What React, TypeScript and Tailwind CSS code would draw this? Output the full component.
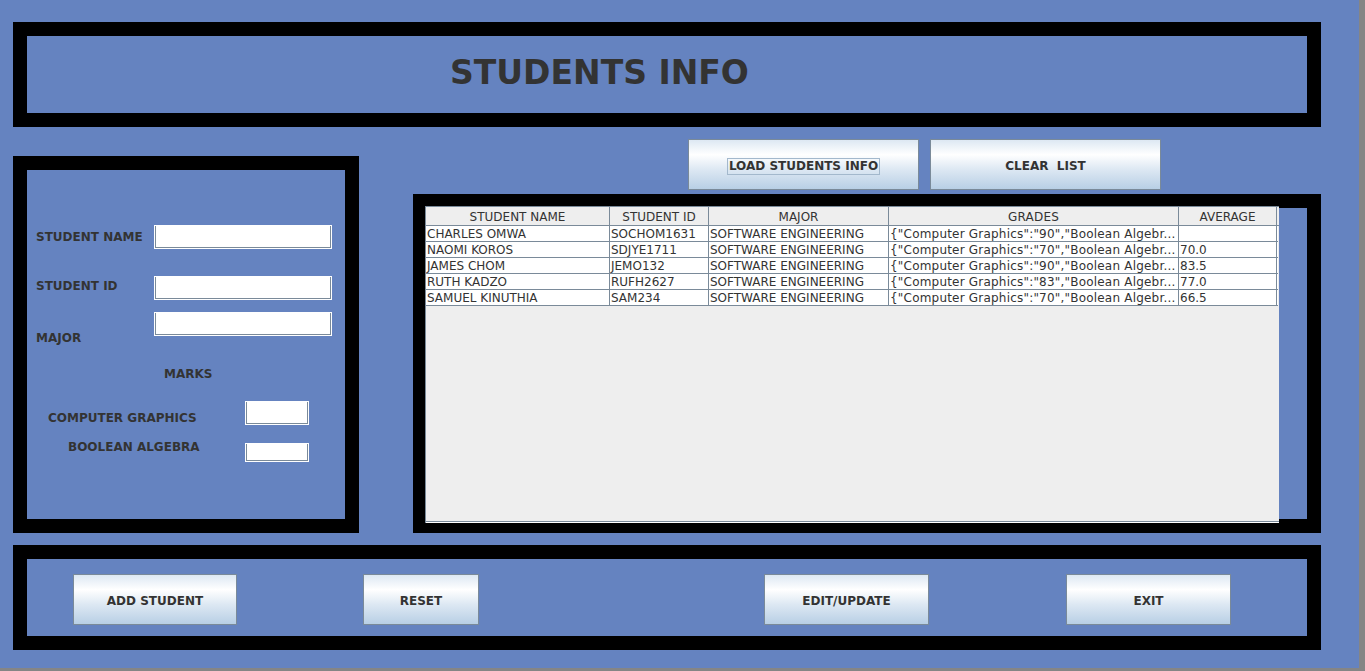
const font = { fontFamily: '"DejaVu Sans", Verdana, sans-serif' }

const rows = [
  ['CHARLES OMWA', 'SOCHOM1631', 'SOFTWARE ENGINEERING', '{"Computer Graphics":"90","Boolean Algebr...', ''],
  ['NAOMI KOROS', 'SDJYE1711', 'SOFTWARE ENGINEERING', '{"Computer Graphics":"70","Boolean Algebr...', '70.0'],
  ['JAMES CHOM', 'JEMO132', 'SOFTWARE ENGINEERING', '{"Computer Graphics":"90","Boolean Algebr...', '83.5'],
  ['RUTH KADZO', 'RUFH2627', 'SOFTWARE ENGINEERING', '{"Computer Graphics":"83","Boolean Algebr...', '77.0'],
  ['SAMUEL KINUTHIA', 'SAM234', 'SOFTWARE ENGINEERING', '{"Computer Graphics":"70","Boolean Algebr...', '66.5'],
]

const headers = ['STUDENT NAME', 'STUDENT ID', 'MAJOR', 'GRADES', 'AVERAGE']
const colW = ['w-[184px]', 'w-[99px]', 'w-[180px]', 'w-[290px] tracking-[0.2px]', 'w-[98px]']

const MetalButton = ({ label, w, focus }: { label: string; w: string; focus?: boolean }) => (
  <button
    className={`${w} h-[51px] border border-[#7a8a99] bg-[linear-gradient(to_bottom,#dde8f3_0%,#ffffff_30%,#dde8f3_60%,#b8cfe5_100%)] flex items-center justify-center pt-[4px] text-[12px] font-bold text-[#333333] whitespace-pre`}
  >
    <span className={focus ? 'border border-[#a3b8cc] px-px leading-[15px]' : 'leading-[15px]'}>{label}</span>
  </button>
)

const Field = ({ w, h }: { w: string; h: string }) => (
  <div className={`${w} ${h} border border-white`}>
    <div className="w-full h-full bg-white border-l border-r border-b border-[#7a8a99]" />
  </div>
)

const Label = ({ text, className }: { text: string; className?: string }) => (
  <div className={`text-[12px] leading-[14px] font-bold text-[#333333] whitespace-nowrap ${className ?? ''}`}>{text}</div>
)

export default function App() {
  return (
    <div className="w-[1365px] h-[671px] bg-[#858585] overflow-hidden" style={font}>
      <div className="w-[1359px] h-[668px] bg-[#6583c0] pt-[22px] pl-[13px]">
        {/* title panel */}
        <div className="w-[1308px] h-[105px] border-[14px] border-black pl-[423px] pt-[20px]">
          <h1 className="text-[33px] leading-none font-bold text-[#333333]">STUDENTS INFO</h1>
        </div>

        <div className="flex items-start mt-[12px]">
          {/* form panel */}
          <div className="w-[346px] h-[377px] mt-[17px] border-[14px] border-black flex flex-col">
            <div className="flex items-center mt-[55px] pl-[9px]">
              <Label text="STUDENT NAME" className="w-[118px]" />
              <Field w="w-[178px]" h="h-[24px]" />
            </div>
            <div className="flex items-start mt-[27px] pl-[9px]">
              <Label text="STUDENT ID" className="w-[118px] mt-[3px]" />
              <Field w="w-[178px]" h="h-[24px]" />
            </div>
            <div className="flex items-start mt-[12px] pl-[9px]">
              <Label text="MAJOR" className="w-[118px] mt-[19px]" />
              <Field w="w-[178px]" h="h-[24px]" />
            </div>
            <Label text="MARKS" className="mt-[22px] pl-[137px]" />
            <div className="flex items-start mt-[20px] pl-[21px]">
              <Label text="COMPUTER GRAPHICS" className="w-[197px] mt-[10px]" />
              <Field w="w-[64px]" h="h-[24px]" />
            </div>
            <div className="flex items-start mt-[14px] pl-[41px]">
              <Label text="BOOLEAN ALGEBRA" className="w-[177px] mt-[1px]" />
              <Field w="w-[64px]" h="h-[19px] mt-[4px]" />
            </div>
          </div>

          {/* table side */}
          <div className="ml-[54px] flex flex-col">
            <div className="flex gap-[11px] pl-[275px]">
              <MetalButton label="LOAD STUDENTS INFO" w="w-[231px]" focus />
              <MetalButton label="CLEAR  LIST" w="w-[231px]" />
            </div>
            <div className="mt-[4px] w-[908px] h-[339px] bg-black flex items-start pl-[12px] pt-[12px]">
              <div className="w-[854px] h-[317px] bg-[#eeeeee] border-l border-t border-[#7a8a99] flex flex-col">
                <div className="flex h-[19px] bg-[#eeeeee] border-b border-[#7a8a99]">
                  {headers.map((h, i) => (
                    <div
                      key={h}
                      className={`${colW[i]} border-r border-[#7a8a99] text-[12px] leading-[20px] text-[#333333] text-center overflow-hidden`}
                    >
                      {h}
                    </div>
                  ))}
                </div>
                {rows.map((r, ri) => (
                  <div key={ri} className="flex h-[16px] bg-white border-b border-[#7a8a99] w-[852px]">
                    {r.map((c, ci) => (
                      <div
                        key={ci}
                        className={`${colW[ci]} border-r border-[#7a8a99] text-[12px] leading-[17px] text-[#333333] pl-[1px] whitespace-nowrap overflow-hidden`}
                      >
                        {c}
                      </div>
                    ))}
                  </div>
                ))}
                <div className="mt-auto h-[2px] border-t border-[#7a8a99] border-b border-b-white" />
              </div>
              <div className="w-[28px] h-[311px] mt-[2px] bg-[#6583c0]" />
            </div>
          </div>
        </div>

        {/* action panel */}
        <div className="mt-[12px] w-[1308px] h-[105px] border-[14px] border-black flex items-start pt-[15px] pl-[46px]">
          <MetalButton label="ADD STUDENT" w="w-[164px]" />
          <div className="ml-[126px]">
            <MetalButton label="RESET" w="w-[116px]" />
          </div>
          <div className="ml-[285px]">
            <MetalButton label="EDIT/UPDATE" w="w-[165px]" />
          </div>
          <div className="ml-[137px]">
            <MetalButton label="EXIT" w="w-[165px]" />
          </div>
        </div>
      </div>
    </div>
  )
}
